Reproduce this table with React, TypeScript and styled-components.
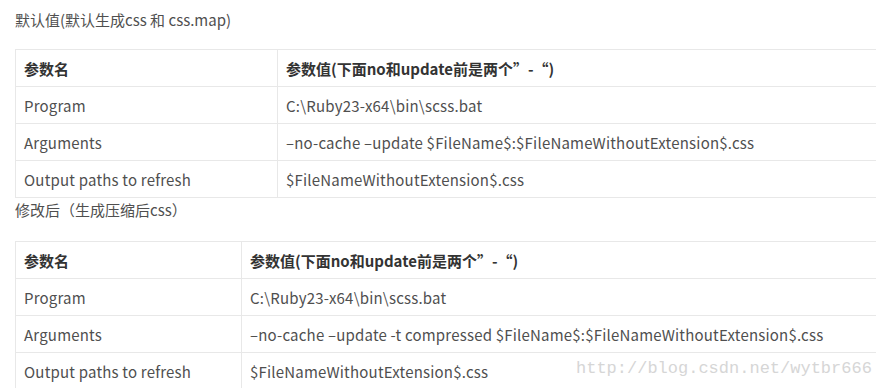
import React from 'react'
import styled, { createGlobalStyle } from 'styled-components'

type Row = {
  name: string
  value: string
}

interface TableProps {
  firstCol: number
}

const GlobalStyle = createGlobalStyle`
  html, body {
    margin: 0;
    padding: 0;
    background: #fff;
  }
  body {
    font-family: "Noto Sans CJK SC", "Open Sans", sans-serif;
    overflow: hidden;
  }
`

const Page = styled.div`
  position: relative;
  width: 876px;
  height: 388px;
  overflow: hidden;
  padding: 8px 0 0 15px;
  box-sizing: border-box;
`

const Caption = styled.p`
  margin: 0;
  font-size: 15px;
  line-height: 24px;
  color: #4f4f4f;
`

const FirstCaption = styled(Caption)`
  margin-bottom: 17px;
`

const SecondCaption = styled(Caption)`
  margin-bottom: 19px;
`

const Table = styled.table<TableProps>`
  border-collapse: collapse;
  table-layout: fixed;
  width: 864px;
  font-size: 15px;
  color: #4f4f4f;

  col:first-child {
    width: ${p => p.firstCol}px;
  }
`

const HeadCell = styled.th`
  text-align: left;
  font-weight: bold;
  color: #333;
  height: 36px;
  padding: 0 8px;
  border: 1px solid #e8e8e8;
  white-space: nowrap;
`

const Cell = styled.td`
  height: 36px;
  padding: 0 8px;
  border: 1px solid #e8e8e8;
  white-space: nowrap;
  letter-spacing: 0.2px;
`

const Watermark = styled.span`
  position: absolute;
  left: 576px;
  top: 359px;
  font-family: "Liberation Mono", monospace;
  font-size: 17px;
  color: #d6d6d6;
  pointer-events: none;
`

const header = '参数值(下面no和update前是两个”-“)'

const before: Row[] = [
  { name: 'Program', value: 'C:\\Ruby23-x64\\bin\\scss.bat' },
  { name: 'Arguments', value: '–no-cache –update $FileName$:$FileNameWithoutExtension$.css' },
  { name: 'Output paths to refresh', value: '$FileNameWithoutExtension$.css' },
]

const after: Row[] = [
  { name: 'Program', value: 'C:\\Ruby23-x64\\bin\\scss.bat' },
  { name: 'Arguments', value: '–no-cache –update -t compressed $FileName$:$FileNameWithoutExtension$.css' },
  { name: 'Output paths to refresh', value: '$FileNameWithoutExtension$.css' },
]

const ParamTable = ({ rows, firstCol }: { rows: Row[], firstCol: number }) => (
  <Table firstCol={firstCol}>
    <colgroup>
      <col />
      <col />
    </colgroup>
    <thead>
      <tr>
        <HeadCell>参数名</HeadCell>
        <HeadCell>{header}</HeadCell>
      </tr>
    </thead>
    <tbody>
      {rows.map((r, i) => (
        <tr key={i}>
          <Cell>{r.name}</Cell>
          <Cell>{r.value}</Cell>
        </tr>
      ))}
    </tbody>
  </Table>
)

const App = () => {
  return (
    <Page>
      <GlobalStyle />
      <FirstCaption>默认值(默认生成css 和 css.map)</FirstCaption>
      <ParamTable rows={before} firstCol={262} />
      <SecondCaption>修改后（生成压缩后css）</SecondCaption>
      <ParamTable rows={after} firstCol={226} />
      <Watermark>http://blog.csdn.net/wytbr666</Watermark>
    </Page>
  )
}

export default App
